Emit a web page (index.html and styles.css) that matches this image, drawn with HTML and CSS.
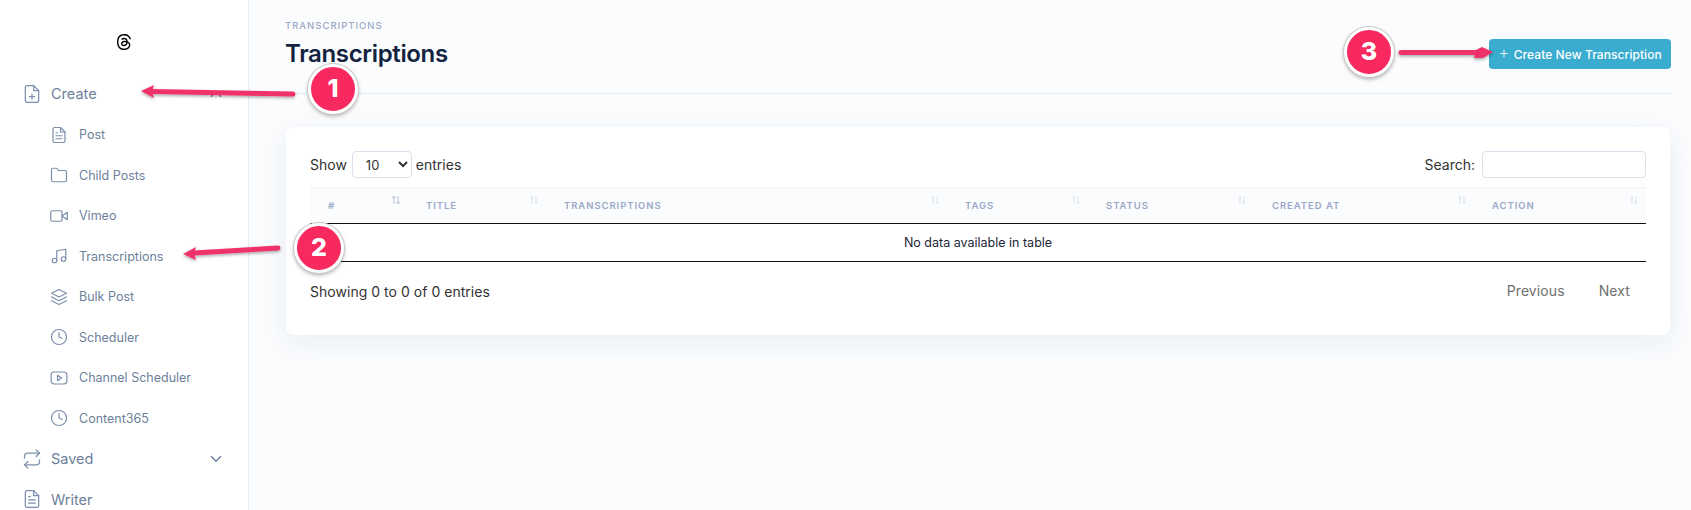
FILE: index.html
```html
<!DOCTYPE html>
<html lang="en">
<head>
<meta charset="utf-8">
<title>Transcriptions</title>
<link rel="stylesheet" href="styles.css">
</head>
<body>
<svg class="sprite" width="0" height="0" aria-hidden="true">
  <symbol id="sort" viewBox="0 0 12 12"><path d="M3.5 10.5V1.5M1.5 3.5l2-2 2 2M8.500 1.500v9M6.500 8.500l2 2 2-2" fill="none" stroke="currentColor" stroke-width="1.200"/></symbol>
</svg>
<div class="app">
  <aside class="sidebar">
    <div class="logo">
      <svg viewBox="0 0 24 24" width="16" height="16"><path fill="#000" d="M12.186 24h-.007c-3.581-.024-6.334-1.205-8.184-3.509C2.35 18.44 1.5 15.586 1.472 12.01v-.017c.03-3.579.879-6.43 2.525-8.482C5.845 1.205 8.6.024 12.18 0h.014c2.746.02 5.043.725 6.826 2.098 1.677 1.29 2.858 3.13 3.509 5.467l-2.04.569c-1.104-3.96-3.898-5.984-8.304-6.015-2.91.022-5.11.936-6.54 2.717C4.307 6.504 3.616 8.914 3.589 12c.027 3.086.718 5.496 2.057 7.164 1.43 1.783 3.631 2.698 6.54 2.717 2.623-.02 4.358-.631 5.8-2.045 1.647-1.613 1.618-3.593 1.09-4.798-.31-.71-.873-1.3-1.634-1.75-.192 1.352-.622 2.446-1.284 3.272-.886 1.102-2.14 1.704-3.73 1.79-1.202.065-2.361-.218-3.259-.801-1.063-.689-1.685-1.74-1.752-2.964-.065-1.19.408-2.285 1.33-3.082.88-.76 2.119-1.207 3.583-1.291a13.853 13.853 0 0 1 3.02.142c-.126-.742-.375-1.332-.75-1.757-.513-.586-1.308-.883-2.359-.89h-.029c-.844 0-1.992.232-2.721 1.32L7.734 7.847c.98-1.454 2.568-2.256 4.478-2.256h.044c3.194.02 5.097 1.975 5.287 5.388.108.046.216.094.321.142 1.49.7 2.58 1.761 3.154 3.07.797 1.82.871 4.79-1.548 7.158-1.85 1.81-4.094 2.628-7.277 2.65Zm1.003-11.69c-.242 0-.487.007-.739.021-1.836.103-2.98.946-2.916 2.143.067 1.256 1.452 1.839 2.784 1.767 1.224-.065 2.818-.543 3.086-3.71a10.5 10.5 0 0 0-2.215-.221z"/></svg>
    </div>
    <nav class="nav">
      <a class="nav-top">
        <svg class="ico" viewBox="0 0 24 24"><path d="M14 2H6a2 2 0 0 0-2 2v16a2 2 0 0 0 2 2h12a2 2 0 0 0 2-2V8z"/><path d="M14 2v6h6M12 18v-6M9 15h6"/></svg>
        <span>Create</span>
        <svg class="chev" viewBox="0 0 24 24"><path d="M6 15l6-6 6 6"/></svg>
      </a>
      <a class="nav-sub">
        <svg class="ico" viewBox="0 0 24 24"><path d="M14 2H6a2 2 0 0 0-2 2v16a2 2 0 0 0 2 2h12a2 2 0 0 0 2-2V8z"/><path d="M14 2v6h6M16 13H8M16 17H8M10 9H8"/></svg>
        <span>Post</span>
      </a>
      <a class="nav-sub">
        <svg class="ico" viewBox="0 0 24 24"><path d="M22 19a2 2 0 0 1-2 2H4a2 2 0 0 1-2-2V5a2 2 0 0 1 2-2h5l2 3h9a2 2 0 0 1 2 2z"/></svg>
        <span>Child Posts</span>
      </a>
      <a class="nav-sub">
        <svg class="ico" viewBox="0 0 24 24"><path d="M23 7l-7 5 7 5z"/><rect x="1" y="5" width="15" height="14" rx="2"/></svg>
        <span>Vimeo</span>
      </a>
      <a class="nav-sub">
        <svg class="ico" viewBox="0 0 24 24"><path d="M9 18V5l12-2v13"/><circle cx="6" cy="18" r="3"/><circle cx="18" cy="16" r="3"/></svg>
        <span>Transcriptions</span>
      </a>
      <a class="nav-sub">
        <svg class="ico" viewBox="0 0 24 24"><path d="M12 2L2 7l10 5 10-5zM2 17l10 5 10-5M2 12l10 5 10-5"/></svg>
        <span>Bulk Post</span>
      </a>
      <a class="nav-sub">
        <svg class="ico" viewBox="0 0 24 24"><circle cx="12" cy="12" r="10"/><path d="M12 6v6l4 2"/></svg>
        <span>Scheduler</span>
      </a>
      <a class="nav-sub">
        <svg class="ico" viewBox="0 0 24 24"><rect x="1.500" y="4" width="21" height="16" rx="4"/><path d="M10 8.500l5.500 3.500-5.500 3.500z"/></svg>
        <span>Channel Scheduler</span>
      </a>
      <a class="nav-sub">
        <svg class="ico" viewBox="0 0 24 24"><circle cx="12" cy="12" r="10"/><path d="M12 6v6l4 2"/></svg>
        <span>Content365</span>
      </a>
      <a class="nav-top">
        <svg class="ico" viewBox="0 0 24 24"><path d="M17 1l4 4-4 4"/><path d="M3 11V9a4 4 0 0 1 4-4h14M7 23l-4-4 4-4"/><path d="M21 13v2a4 4 0 0 1-4 4H3"/></svg>
        <span>Saved</span>
        <svg class="chev" viewBox="0 0 24 24"><path d="M6 9l6 6 6-6"/></svg>
      </a>
      <a class="nav-top">
        <svg class="ico" viewBox="0 0 24 24"><path d="M14 2H6a2 2 0 0 0-2 2v16a2 2 0 0 0 2 2h12a2 2 0 0 0 2-2V8z"/><path d="M14 2v6h6M16 13H8M16 17H8M10 9H8"/></svg>
        <span>Writer</span>
      </a>
    </nav>
  </aside>
  <main class="main">
    <header class="page-head">
      <div>
        <div class="crumb">TRANSCRIPTIONS</div>
        <h1 class="title">Transcriptions</h1>
      </div>
      <button class="btn-create" type="button"><span class="plus">+</span>Create New Transcription</button>
    </header>
    <section class="card">
      <div class="controls">
        <label class="length">Show
          <select class="select"><option>10</option><option>25</option></select>
          entries</label>
        <label class="search">Search: <input class="input" type="search"></label>
      </div>
      <table class="table">
        <colgroup>
          <col class="c1"><col class="c2"><col class="c3"><col class="c4"><col class="c5"><col class="c6"><col class="c7">
        </colgroup>
        <thead>
          <tr>
            <th>#<svg class="sort sorted"><use href="#sort"/></svg></th>
            <th>TITLE<svg class="sort"><use href="#sort"/></svg></th>
            <th>TRANSCRIPTIONS<svg class="sort"><use href="#sort"/></svg></th>
            <th>TAGS<svg class="sort"><use href="#sort"/></svg></th>
            <th>STATUS<svg class="sort"><use href="#sort"/></svg></th>
            <th>CREATED AT<svg class="sort"><use href="#sort"/></svg></th>
            <th>ACTION<svg class="sort"><use href="#sort"/></svg></th>
          </tr>
        </thead>
        <tbody>
          <tr><td colspan="7">No data available in table</td></tr>
        </tbody>
      </table>
      <div class="foot">
        <div class="info">Showing 0 to 0 of 0 entries</div>
        <div class="pager"><a>Previous</a><a>Next</a></div>
      </div>
    </section>
  </main>
</div>
<svg class="arrows" width="1691" height="510" viewBox="0 0 1691 510" aria-hidden="true">
  <defs>
    <filter id="ash" x="-10%" y="-200%" width="120%" height="500%"><feDropShadow dx="0" dy="1.500" stdDeviation="1.500" flood-color="#000" flood-opacity=".35"/></filter>
  </defs>
  <g class="arrow" filter="url(#ash)">
    <path d="M293 94L152 91.500" class="shaft"/>
    <path d="M141 91L154 85L152 91.500L154 98z" class="head"/>
    <path d="M278 248L194 253" class="shaft"/>
    <path d="M183 254L196 247L194 253L196 260z" class="head"/>
    <path d="M1401 52.500H1480" class="shaft"/>
    <path d="M1493 52L1482 47L1476 50L1474 58L1483 58z" class="head"/>
  </g>
</svg>
<div class="badge b1">1</div>
<div class="badge b2">2</div>
<div class="badge b3">3</div>
</body>
</html>
```
FILE: styles.css
```css
* { box-sizing: border-box; }
html, body { margin: 0; height: 510px; overflow: hidden; }
body { position: relative; font-family: "Inter", "Liberation Sans", sans-serif; color: #333; background: #fafcfe; }
.sprite { position: absolute; }
.app { display: flex; height: 510px; overflow: hidden; }

.sidebar { width: 249px; flex: none; background: #fff; border-right: 1px solid #e6ebf1; }
.logo { height: 73px; display: flex; justify-content: center; align-items: flex-start; padding: 34px 1px 0 0; }
.nav { display: flex; flex-direction: column; }
.nav a { display: flex; align-items: center; color: #6e7f9b; height: 40.500px; }
.nav a:first-child { height: 41.500px; }
.nav-top { padding-left: 22px; font-size: 14.500px; gap: 9px; }
.nav-top .ico { width: 20px; height: 20px; stroke-width: 1.500; }
.nav-sub { padding-left: 50px; font-size: 12.500px; gap: 11px; }
.ico { width: 18px; height: 18px; flex: none; fill: none; stroke: #7d8dab; stroke-width: 1.600; stroke-linecap: round; stroke-linejoin: round; }
.chev { width: 18px; height: 18px; margin-left: auto; margin-right: 23px; fill: none; stroke: #6e7f9b; stroke-width: 2; stroke-linecap: round; stroke-linejoin: round; }

.main { flex: 1; min-width: 0; padding: 0 20px 0 36px; }
.page-head { height: 94px; display: flex; justify-content: space-between; align-items: flex-start; border-bottom: 1px solid #e6ebf1; }
.crumb { font-size: 9.500px; font-weight: 500; letter-spacing: 1px; color: #9aa8c7; margin-top: 20px; line-height: 12px; }
.title { margin: 6px 0 0; font-size: 24px; line-height: 32px; font-weight: 600; color: #14233f; letter-spacing: -.35px; }
.btn-create { margin-top: 39px; height: 30px; width: 182px; padding: 0 0 0 9px; border: 0; border-radius: 4px; background: #3aaccf; color: #fff; font: 500 12px "Inter", "Liberation Sans", sans-serif; letter-spacing: .07px; text-align: left; display: flex; align-items: center; }
.plus { font-size: 18px; font-weight: 200; margin-right: 4px; margin-top: -3px; }

.card { margin: 33px 1px 0; height: 208px; background: #fff; border-radius: 8px; padding: 24px; box-shadow: 0 8px 30px rgba(35, 50, 90, .07); }
.controls { display: flex; justify-content: space-between; align-items: center; height: 27px; font-size: 14px; color: #333; }
.length, .search { display: flex; align-items: center; gap: 4px; }
.select { width: 60px; height: 27px; margin: 0 0 0 1px; border: 1px solid #dcdfec; border-radius: 4px; background: #fff; padding-left: 9px; font: 13px "Inter", sans-serif; color: #333; }
.search { gap: 7px; }
.input { width: 164px; height: 27px; border: 1px solid #dcdfec; border-radius: 4px; background: #fff; appearance: none; }

.table { width: 100%; margin-top: 9px; border-collapse: collapse; table-layout: fixed; font-size: 12.500px; }
.c1 { width: 98px; } .c2 { width: 138px; } .c3 { width: 401px; } .c4 { width: 141px; } .c5 { width: 166px; } .c6 { width: 220px; } .c7 { width: 172px; }
.table th { position: relative; height: 36px; padding: 0 0 0 18px; background: #fafcfe; border-top: 1px solid #f1f3f7; border-bottom: 1.500px solid #111; text-align: left; font-size: 9.500px; font-weight: 600; letter-spacing: .95px; color: #9aa8c7; }
.sort { position: absolute; right: 7px; top: 7px; width: 10px; height: 10px; color: #e0e3ea; }
.sort.sorted { color: #b5c0d2; }
.table td { height: 38px; text-align: center; border-bottom: 1.500px solid #111; color: #1c2638; }
.foot { display: flex; justify-content: space-between; align-items: center; margin-top: 18px; font-size: 14px; color: #333; height: 22px; }
.info { letter-spacing: .03px; }
.pager { display: flex; gap: 34px; color: #707070; padding-right: 16px; font-size: 14px; letter-spacing: .1px; margin-top: -1px; }

.arrows { position: absolute; left: 0; top: 0; pointer-events: none; }
.shaft { fill: none; stroke: #f0336a; stroke-width: 5; stroke-linecap: round; }
.head { fill: #f0336a; }
.badge { position: absolute; width: 50px; height: 50px; border-radius: 50%; background: #f7295f; border: 3.500px solid #fff; box-shadow: 0 0 0 1px #c9c9c9, 0 2px 4px rgba(0, 0, 0, .35); color: #fff; font: 800 25px/43px "Inter", "Liberation Sans", sans-serif; text-align: center; }
.b1 { left: 308px; top: 64px; }
.b2 { left: 294px; top: 223px; }
.b3 { left: 1344px; top: 27px; }
```
